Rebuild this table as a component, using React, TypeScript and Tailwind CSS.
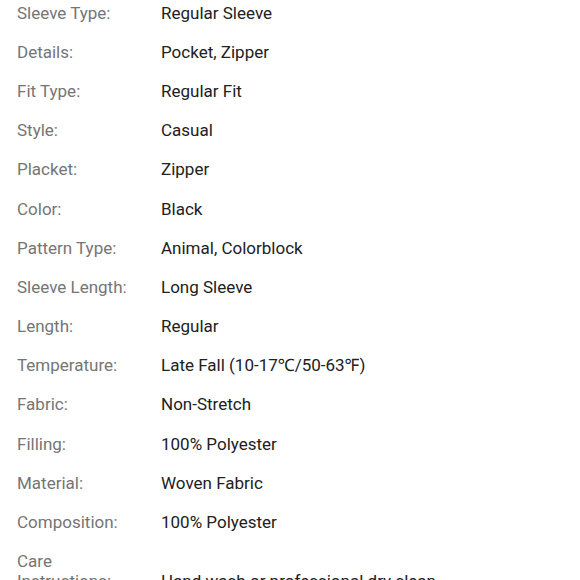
import React from "react";

const rows: [string, string][] = [
  ["Sleeve Type:", "Regular Sleeve"],
  ["Details:", "Pocket, Zipper"],
  ["Fit Type:", "Regular Fit"],
  ["Style:", "Casual"],
  ["Placket:", "Zipper"],
  ["Color:", "Black"],
  ["Pattern Type:", "Animal, Colorblock"],
  ["Sleeve Length:", "Long Sleeve"],
  ["Length:", "Regular"],
  ["Temperature:", "Late Fall (10-17℃/50-63℉)"],
  ["Fabric:", "Non-Stretch"],
  ["Filling:", "100% Polyester"],
  ["Material:", "Woven Fabric"],
  ["Composition:", "100% Polyester"],
  ["Care Instructions:", "Hand wash or professional dry clean"],
];

export default function App() {
  return (
    <div className="w-[580px] h-[580px] overflow-hidden bg-white" style={{ fontFamily: "Roboto, 'Noto Sans', sans-serif" }}>
      <div className="flex flex-col mt-[-7px] px-[17px]">
        {rows.map(([k, v]) => (
          <div key={k} className="flex items-end py-[9.6px] text-[17px] leading-[20px]">
            <div className="w-[128px] shrink-0 text-[#757575]">{k}</div>
            <div className="ml-[16px] text-[#212121]">{v}</div>
          </div>
        ))}
      </div>
    </div>
  );
}
